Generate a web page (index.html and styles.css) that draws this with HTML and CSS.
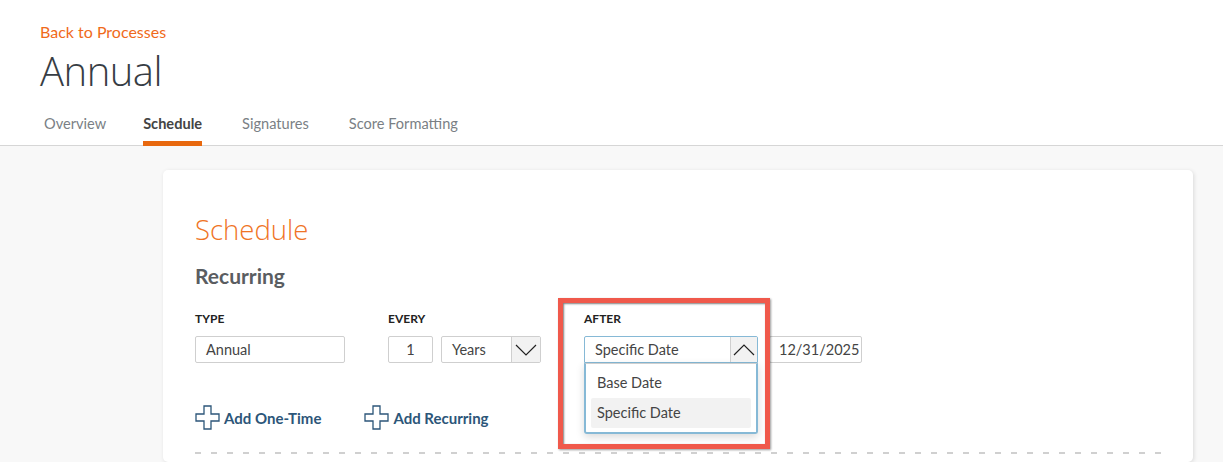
FILE: index.html
```html
<!DOCTYPE html>
<html>
<head>
<meta charset="utf-8">
<link rel="stylesheet" href="styles.css">
</head>
<body>
<header class="top">
  <a class="back" href="#">Back to Processes</a>
  <h1 class="title">Annual</h1>
  <nav class="tabs">
    <span class="tab first">Overview</span>
    <span class="tab active">Schedule</span>
    <span class="tab">Signatures</span>
    <span class="tab">Score Formatting</span>
  </nav>
</header>
<main class="content">
  <section class="card">
    <h2 class="card-title">Schedule</h2>
    <h3 class="sub">Recurring</h3>
    <div class="fields">
      <div class="field f-type">
        <label class="lbl">TYPE</label>
        <div class="input w-type">Annual</div>
      </div>
      <div class="field f-every">
        <label class="lbl">EVERY</label>
        <div class="row">
          <div class="input w-num">1</div>
          <div class="select w-years">
            <span class="sel-text">Years</span>
            <span class="sel-arrow"><svg width="22" height="12" viewBox="0 0 22 12"><path d="M1 1 L11 11 L21 1" fill="none" stroke="#222" stroke-width="1.2"/></svg></span>
          </div>
        </div>
      </div>
      <div class="field f-after">
        <label class="lbl">AFTER</label>
        <div class="row">
          <div class="dd">
            <div class="select open w-after">
              <span class="sel-text">Specific Date</span>
              <span class="sel-arrow"><svg width="22" height="12" viewBox="0 0 22 12"><path d="M1 11 L11 1 L21 11" fill="none" stroke="#222" stroke-width="1.2"/></svg></span>
            </div>
            <ul class="menu">
              <li class="opt">Base Date</li>
              <li class="opt hl">Specific Date</li>
            </ul>
          </div>
          <div class="input w-date">12/31/2025</div>
        </div>
      </div>
    </div>
    <div class="adds">
      <span class="add"><svg class="plus" width="25" height="25" viewBox="0 0 25 25"><path d="M9 1 H16 V9 H24 V16 H16 V24 H9 V16 H1 V9 H9 Z" fill="none" stroke="#2c5679" stroke-width="1.3"/></svg>Add One-Time</span>
      <span class="add"><svg class="plus" width="25" height="25" viewBox="0 0 25 25"><path d="M9 1 H16 V9 H24 V16 H16 V24 H9 V16 H1 V9 H9 Z" fill="none" stroke="#2c5679" stroke-width="1.3"/></svg>Add Recurring</span>
    </div>
    <div class="dash"></div>
  </section>
</main>
<div class="highlight"></div>
</body>
</html>
```

FILE: styles.css
```css
* { box-sizing: border-box; }
html, body { margin: 0; padding: 0; }
body {
  width: 1223px;
  height: 462px;
  overflow: hidden;
  background: #f8f8f8;
  font-family: "Lato", "Source Sans Pro", sans-serif;
  color: #333;
  position: relative;
}
.top {
  background: #fff;
  border-bottom: 1px solid #d6d6d6;
  padding: 21px 0 0 40px;
  height: 146px;
}
.back {
  display: block;
  color: #f06a1a;
  text-decoration: none;
  font-size: 16px;
  line-height: 21px;
}
.title {
  margin: 5px 0 0 0;
  font-family: "Open Sans", sans-serif;
  font-weight: 300;
  font-size: 40px;
  line-height: 48px;
  color: #373d44;
  letter-spacing: -0.5px;
}
.tabs {
  display: flex;
  gap: 40px;
  margin-top: 19px;
  padding-left: 4px;
}
.tab {
  font-size: 14.6px;
  color: #7a7f85;
  line-height: 20px;
  padding-bottom: 7px;
  border-bottom: 5px solid transparent;
}
.tab.first { margin-right: -3px; }
.tab.active {
  color: #444;
  font-weight: 700;
  border-bottom-color: #e8680e;
}
.content {
  padding: 24px 30px 0 163px;
}
.card {
  width: 1030px;
  height: 292px;
  background: #fff;
  border-radius: 5px;
  box-shadow: 1px 1px 4px rgba(0,0,0,0.12);
  padding: 42px 32px 0 32px;
}
.card-title {
  margin: 0;
  font-family: "Open Sans", sans-serif;
  font-weight: 300;
  font-size: 27.5px;
  line-height: 36px;
  color: #ef7425;
}
.sub {
  margin: 15px 0 0 0;
  font-size: 21px;
  font-weight: 700;
  color: #5a5d61;
  line-height: 26px;
}
.fields {
  display: flex;
  margin-top: 22px;
}
.field { display: flex; flex-direction: column; }
.f-type { width: 193px; }
.f-every { width: 196px; }
.lbl {
  font-size: 12px;
  font-weight: 700;
  color: #222;
  line-height: 16px;
  margin-bottom: 9px;
}
.row { display: flex; align-items: flex-start; }
.input {
  height: 27px;
  border: 1px solid #cfcfcf;
  border-radius: 2px;
  font-size: 14.5px;
  line-height: 25px;
  padding: 0 10px;
  color: #444;
}
.w-type { width: 150px; }
.w-num { width: 45px; text-align: center; margin-right: 8px; padding: 0; }
.w-date { width: 93px; margin-left: 11px; padding: 0 9px; }
.select {
  display: flex;
  height: 27px;
  border: 1px solid #cfcfcf;
  border-radius: 2px;
  font-size: 14.5px;
  color: #444;
  overflow: hidden;
}
.w-years { width: 100px; }
.w-after { width: 174px; }
.sel-text { flex: 1; padding: 0 10px; line-height: 25px; }
.sel-arrow {
  width: 29px;
  background: #f2f2f2;
  border-left: 1px solid #cfcfcf;
  display: flex;
  align-items: center;
  justify-content: center;
}
.select.open {
  border-color: #86b9d6;
  border-radius: 2px 2px 0 0;
}
.select.open .sel-arrow { width: 27px; }
.dd { position: relative; width: 174px; }
.menu {
  list-style: none;
  margin: 0;
  padding: 4px 5px 4px 5px;
  border: 2px solid #86b9d6;
  border-top: 1px solid #cfcfcf;
  border-radius: 0 0 3px 3px;
  background: #fff;
  box-shadow: 0 3px 8px rgba(0,0,0,0.15);
}
.opt {
  font-size: 14.5px;
  color: #444;
  line-height: 30px;
  padding: 0 6px;
}
.opt.hl { background: #f2f2f2; border-radius: 2px; }
.adds {
  display: flex;
  gap: 43px;
  margin-top: -29px;
}
.add {
  display: flex;
  align-items: center;
  gap: 4px;
  font-size: 15px;
  font-weight: 700;
  color: #2c5679;
}
.dash {
  margin-top: 22px;
  width: 966px;
  height: 2px;
  background: repeating-linear-gradient(to right, #d0d0d0 0 6px, transparent 6px 16px);
}
.highlight {
  position: absolute;
  left: 558px;
  top: 298px;
  width: 212px;
  height: 151px;
  border: 5px solid #f0594b;
  box-shadow: inset 1px 1px 2px rgba(0,0,0,0.5), 1px 1px 2px rgba(0,0,0,0.4);
  pointer-events: none;
}
```
